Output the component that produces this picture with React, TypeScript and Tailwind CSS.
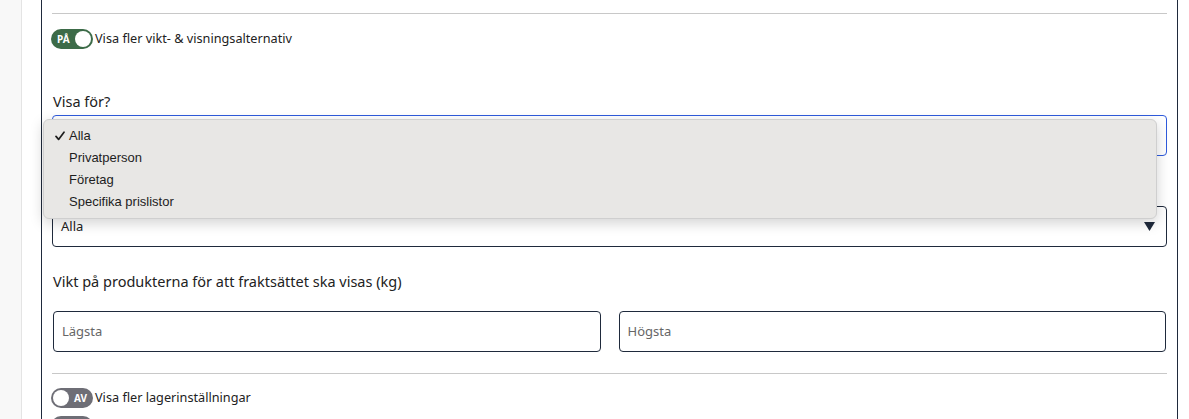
import { ReactNode } from 'react'

function Toggle({ on, label }: { on: boolean; label: string }) {
  return (
    <div className="flex items-center gap-[2px]">
      <div
        className={
          on
            ? 'flex h-[20px] w-[42px] items-center justify-between rounded-full bg-[#3c6b48] pl-[6px] pr-[2px]'
            : 'flex h-[20px] w-[42px] items-center justify-between rounded-full bg-[#6e6e76] pl-[2px] pr-[6px]'
        }
      >
        {on ? (
          <>
            <span className="text-[10px] font-bold leading-none text-white">PÅ</span>
            <span className="h-[16px] w-[16px] rounded-full bg-white" />
          </>
        ) : (
          <>
            <span className="h-[16px] w-[16px] rounded-full bg-white" />
            <span className="text-[10px] font-bold leading-none text-white">AV</span>
          </>
        )}
      </div>
      <span className="text-[12.7px] text-[#222]">{label}</span>
    </div>
  )
}

function Field({ children }: { children: ReactNode }) {
  return (
    <div className="flex h-[41px] items-center rounded-[4px] border border-[#1f2a3c] px-[8px] text-[13px]">
      {children}
    </div>
  )
}

const options = ['Alla', 'Privatperson', 'Företag', 'Specifika prislistor']

export default function App() {
  return (
    <div
      className="flex h-[419px] w-[1189px] overflow-hidden bg-white"
      style={{ fontFamily: '"Noto Sans", "Open Sans", sans-serif' }}
    >
      <div className="w-[22px] shrink-0 border-r border-[#e4e4e4] bg-[#f8f8f8]" />
      <div className="w-[19px] shrink-0" />
      <div className="flex w-[1137px] shrink-0 flex-col border-x-[1.5px] border-[#1f2a3c] pl-[10px] pr-[10px] pt-[13px]">
        <div className="border-t border-[#c8c8c8]" />

        <div className="mt-[15px] -ml-[1px]">
          <Toggle on label="Visa fler vikt- & visningsalternativ" />
        </div>

        <label className="mt-[42px] pl-[1px] text-[14.5px] leading-[20px] text-[#222]">Visa för?</label>

        <div className="relative mt-[4px]">
          <div className="h-[41px] rounded-[4px] border border-[#2f5bdc]" />
          <div
            className="absolute left-[-9px] top-[4px] z-10 w-[1114px] rounded-[6px] border border-[#cfcfcf] bg-[#e8e7e5] py-[5px] shadow-[0_4px_14px_rgba(0,0,0,0.18)]"
            style={{ fontFamily: '"Liberation Sans", Arial, sans-serif' }}
          >
            {options.map((o, i) => (
              <div key={o} className="flex h-[22px] items-center text-[13px] text-[#1d1d1d]">
                <span className="flex w-[25px] items-center pl-[11px]">
                  {i === 0 && (
                    <svg width="10" height="10" viewBox="0 0 10 10">
                      <path d="M1 5.4l2.6 3L9 1.2" fill="none" stroke="#1d1d1d" strokeWidth="1.7" strokeLinecap="round" strokeLinejoin="round" />
                    </svg>
                  )}
                </span>
                <span>{o}</span>
              </div>
            ))}
          </div>
        </div>

        <div className="mt-[50px]">
          <Field>
            <span className="flex-1 text-[#222]">Alla</span>
            <svg width="11" height="9" viewBox="0 0 11 9" className="mr-[3px]">
              <path d="M0 0h11L5.5 9z" fill="#1f2a3c" />
            </svg>
          </Field>
        </div>

        <label className="mt-[24px] pl-[1px] text-[14.5px] leading-[20px] text-[#222]">
          Vikt på produkterna för att fraktsättet ska visas (kg)
        </label>

        <div className="mt-[20px] grid grid-cols-2 gap-[18px] pl-[1px] pr-[1px]">
          <Field>
            <span className="text-[#666]">Lägsta</span>
          </Field>
          <Field>
            <span className="text-[#666]">Högsta</span>
          </Field>
        </div>

        <div className="mt-[21px] border-t border-[#c8c8c8]" />

        <div className="mt-[14px] -ml-[1px]">
          <Toggle on={false} label="Visa fler lagerinställningar" />
        </div>
        <div className="mt-[8px] -ml-[1px]">
          <div className="h-[20px] w-[42px] rounded-full bg-[#6e6e76]" />
        </div>
      </div>
    </div>
  )
}
